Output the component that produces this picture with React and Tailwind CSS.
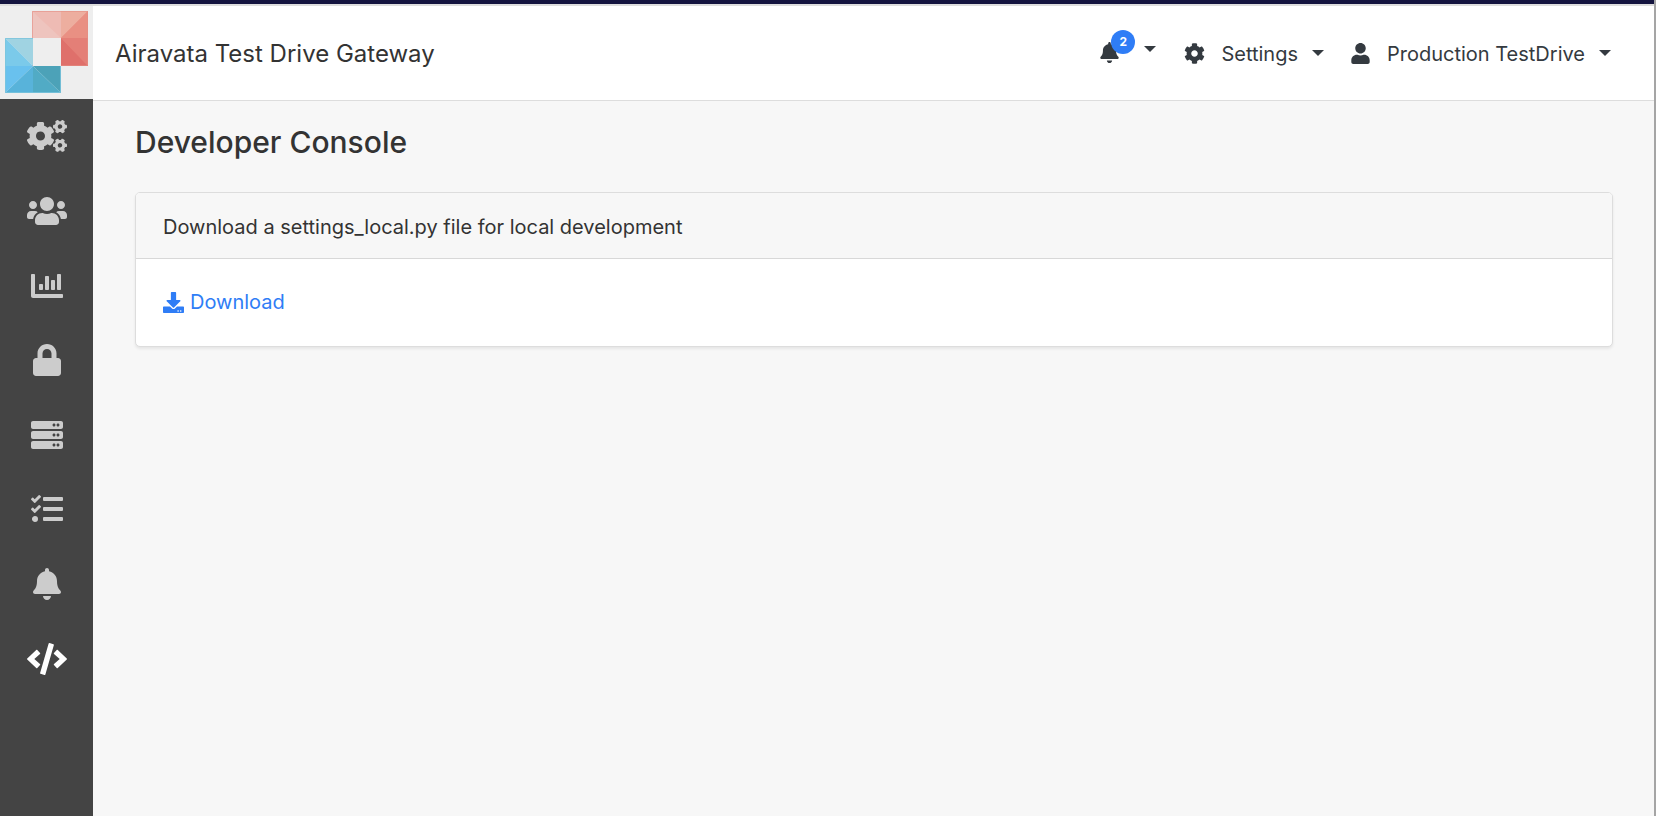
import { FaBell, FaChartBar, FaCode, FaCog, FaCogs, FaDownload, FaLock, FaServer, FaTasks, FaUser, FaUsers } from "react-icons/fa";

const navItems = [
  { label: "Application Catalog", Icon: FaCogs },
  { label: "Manage Users", Icon: FaUsers },
  { label: "Experiment Statistics", Icon: FaChartBar },
  { label: "Credential Store", Icon: FaLock },
  { label: "Group Resource Profiles", Icon: FaServer },
  { label: "Gateway Resource Profile", Icon: FaTasks },
  { label: "Manage Notices", Icon: FaBell },
  { label: "Developer Console", Icon: FaCode, active: true },
];

function Logo() {
  return (
    <svg viewBox="0 0 93 93" className="block aspect-square w-full" aria-hidden="true">
      <rect width="93" height="93" fill="#eeeeee" />
      <rect x="32" y="5" width="56" height="55" fill="#e99083" />
      <path d="M32 5h29v27H32z" fill="#eec4be" />
      <path d="M32 5h29v27z" fill="#eebbb4" />
      <path d="M61 5h27L61 32z" fill="#edae9f" />
      <path d="M88 5v27H61z" fill="#e99083" />
      <path d="M61 32h27v28z" fill="#e47f77" />
      <path d="M61 32v28h27z" fill="#df706b" />
      <path d="M5 32h28v28z" fill="#a0d3e2" />
      <path d="M5 32v28h28z" fill="#7bcaea" />
      <path d="M5 60h28L5 87z" fill="#69c1ee" />
      <path d="M33 60v27H5z" fill="#58b3da" />
      <path d="M33 60h28v27z" fill="#4ca2b8" />
      <path d="M33 60v27h28z" fill="#51abc5" />
      <rect x="33" y="32" width="28" height="28" fill="#eeeeee" />
      <path d="M32.500 32V5.500h55V59.500H61" fill="none" stroke="#e58e84" strokeOpacity=".6" />
      <path d="M33 32.500H5.500v54H60.500V60" fill="none" stroke="#7cc4dc" strokeOpacity=".8" />
    </svg>
  );
}

function Caret() {
  return (
    <svg viewBox="0 0 12 6" className="mb-[2px] h-[6px] w-[12px] fill-current" aria-hidden="true">
      <path d="M0 0h12L6 6z" />
    </svg>
  );
}

export default function App() {
  return (
    <div className="flex min-h-screen flex-col border-r-2 border-[#a5a5a5] bg-[#f7f7f7] font-['Inter','Liberation_Sans',sans-serif] text-[20px] leading-[31px] text-[#333333]">
      <div className="h-[6px] border-b-2 border-[#dddddd] bg-[#14143f]" />
      <div className="flex flex-1">
        <aside className="w-[93px] shrink-0 bg-[#444444]">
          <a href="#home" aria-label="Home" className="block">
            <Logo />
          </a>
          <nav aria-label="Main" className="flex h-[597px] flex-col">
            {navItems.map(({ label, Icon, active }) => (
              <a
                key={label}
                href="#nav"
                aria-label={label}
                aria-current={active ? "page" : undefined}
                className={active ? "flex flex-1 items-center justify-center text-white" : "flex flex-1 items-center justify-center text-[#cccccc]"}
              >
                <Icon className="h-8 w-10" />
              </a>
            ))}
          </nav>
        </aside>
        <div className="min-w-0 flex-1">
          <header className="flex h-[95px] items-center justify-between border-b border-[#dddddd] bg-white pr-[43px] pl-[22px]">
            <div className="text-[24px]">Airavata Test Drive Gateway</div>
            <div className="flex items-center pt-[2px] text-[#343a40]">
              <button type="button" aria-label="Notifications" className="relative mr-7 flex items-center gap-6 pb-2">
                <FaBell className="mt-1 h-[21px] w-auto" />
                <span className="absolute -top-2 left-3 flex size-6 items-center justify-center rounded-full bg-[#2f7df6] text-xs font-bold text-white">
                  2
                </span>
                <Caret />
              </button>
              <button type="button" className="mr-[26px] flex items-center">
                <FaCog className="mr-4 mb-[2px] size-[21px]" />
                Settings
                <span className="ml-[14px]">
                  <Caret />
                </span>
              </button>
              <button type="button" className="flex items-center">
                <FaUser className="mr-4 mb-[2px] h-[21px] w-auto" />
                Production TestDrive
                <span className="ml-[14px]">
                  <Caret />
                </span>
              </button>
            </div>
          </header>
          <main className="pt-[21px] pr-[41px] pl-[42px]">
            <h1 className="mb-[30px] text-[30px] leading-10 font-medium">Developer Console</h1>
            <section className="overflow-hidden rounded-[5px] border border-[#dddddd] bg-white shadow-[0_2px_3px_rgba(0,0,0,0.07)]">
              <div className="border-b border-[#d8d8d8] bg-[#f7f7f7] px-[27px] pt-[19px] pb-[15px]">
                Download a settings_local.py file for local development
              </div>
              <div className="px-[27px] py-7">
                <a href="#download" className="flex w-fit items-center gap-[6px] text-[#2f7df6]">
                  <FaDownload className="size-[21px]" />
                  Download
                </a>
              </div>
            </section>
          </main>
        </div>
      </div>
    </div>
  );
}
